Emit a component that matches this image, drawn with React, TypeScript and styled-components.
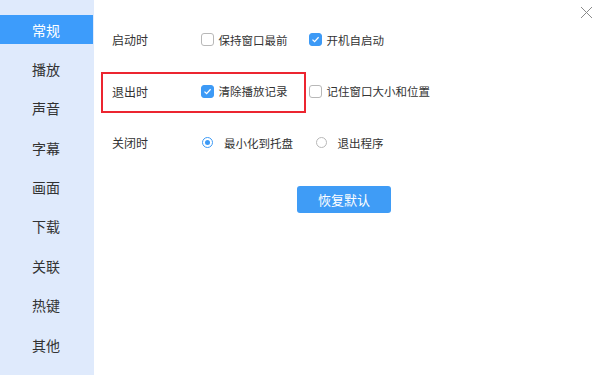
import React from "react";
import styled, { createGlobalStyle } from "styled-components";

const GlobalStyle = createGlobalStyle`
  html, body {
    margin: 0;
    padding: 0;
    width: 600px;
    height: 375px;
    overflow: hidden;
    background: #ffffff;
  }
  * { box-sizing: border-box; }
  body {
    font-family: "Noto Sans CJK SC", "Noto Sans", sans-serif;
    color: #333333;
  }
`;

const Window = styled.div`
  position: relative;
  width: 600px;
  height: 375px;
  display: flex;
  background: #ffffff;
`;

const Sidebar = styled.nav`
  width: 94px;
  height: 100%;
  background: #dfeafc;
  display: flex;
  flex-direction: column;
  gap: 10.4px;
  padding-top: 15px;
`;

const NavItem = styled.div<{ $active?: boolean }>`
  height: 29px;
  display: flex;
  align-items: center;
  justify-content: center;
  font-size: 14px;
  padding-right: 1px;
  color: ${(p) => (p.$active ? "#ffffff" : "#333333")};
  background: ${(p) => (p.$active ? "#3d9cfb" : "transparent")};
  width: 93px;
`;

const Main = styled.main`
  flex: 1;
  display: flex;
  flex-direction: column;
  padding: 29.5px 0 0 18px;
  gap: 31.5px;
`;

const Row = styled.div`
  position: relative;
  height: 20px;
  display: flex;
  align-items: center;
  font-size: 12px;
`;

const Label = styled.div`
  width: 89px;
  font-size: 12px;
  color: #333333;
`;

const Options = styled.div`
  display: flex;
  align-items: center;
  gap: 21.5px;
`;

const Option = styled.label<{ $radio?: boolean }>`
  display: flex;
  align-items: center;
  gap: ${(p) => (p.$radio ? "11px" : "4.5px")};
  padding-left: ${(p) => (p.$radio ? "1px" : "0")};
  font-size: 11.5px;
  color: #333333;
  cursor: pointer;
`;

const Box = styled.span<{ $checked?: boolean }>`
  width: 13px;
  height: 13px;
  border-radius: 3px;
  display: inline-flex;
  align-items: center;
  justify-content: center;
  background: ${(p) => (p.$checked ? "#3d9af6" : "#ffffff")};
  border: 1px solid ${(p) => (p.$checked ? "#3d9af6" : "#b8b8b8")};
`;

const Radio = styled.span<{ $checked?: boolean }>`
  width: 11px;
  height: 11px;
  border-radius: 50%;
  display: inline-flex;
  align-items: center;
  justify-content: center;
  border: 1px solid ${(p) => (p.$checked ? "#3d9af6" : "#b8b8b8")};
  background: #ffffff;
  &::after {
    content: "";
    width: 5px;
    height: 5px;
    border-radius: 50%;
    background: ${(p) => (p.$checked ? "#3d9af6" : "transparent")};
  }
`;

const Highlight = styled.div`
  position: absolute;
  left: -11px;
  top: -9px;
  width: 205px;
  height: 41px;
  border: 2px solid #ec2530;
  pointer-events: none;
`;

const Button = styled.button`
  margin-left: 185px;
  margin-top: 1.5px;
  width: 94px;
  height: 27px;
  border: none;
  border-radius: 3px;
  background: #3f9cf6;
  color: #ffffff;
  font-family: "Noto Sans CJK SC", "Noto Sans", sans-serif;
  font-size: 13px;
  cursor: pointer;
  align-self: flex-start;
`;

const Close = styled.button`
  position: absolute;
  top: 6px;
  right: 7px;
  width: 13px;
  height: 13px;
  padding: 0;
  border: none;
  background: transparent;
  display: flex;
  cursor: pointer;
`;

const Check = () => (
  <svg width="9" height="9" viewBox="0 0 9 9">
    <path d="M1.5 4.6 L3.6 6.6 L7.6 2.3" fill="none" stroke="#ffffff" strokeWidth="1.3" />
  </svg>
);

const CheckOption = ({ checked, text }: { checked?: boolean; text: string }) => (
  <Option>
    <Box $checked={checked}>{checked && <Check />}</Box>
    {text}
  </Option>
);

const RadioOption = ({ checked, text }: { checked?: boolean; text: string }) => (
  <Option $radio>
    <Radio $checked={checked} />
    {text}
  </Option>
);

const navItems = ["常规", "播放", "声音", "字幕", "画面", "下载", "关联", "热键", "其他"];

export default function App() {
  return (
    <>
      <GlobalStyle />
      <Window>
        <Sidebar>
          {navItems.map((n, i) => (
            <NavItem key={n} $active={i === 0}>
              {n}
            </NavItem>
          ))}
        </Sidebar>
        <Main>
          <Row>
            <Label>启动时</Label>
            <Options>
              <CheckOption text="保持窗口最前" />
              <CheckOption checked text="开机自启动" />
            </Options>
          </Row>
          <Row>
            <Highlight />
            <Label>退出时</Label>
            <Options>
              <CheckOption checked text="清除播放记录" />
              <CheckOption text="记住窗口大小和位置" />
            </Options>
          </Row>
          <Row>
            <Label>关闭时</Label>
            <Options>
              <RadioOption checked text="最小化到托盘" />
              <RadioOption text="退出程序" />
            </Options>
          </Row>
          <Button>恢复默认</Button>
        </Main>
        <Close aria-label="关闭">
          <svg width="13" height="13" viewBox="0 0 13 13">
            <path d="M1 1 L12 12 M12 1 L1 12" stroke="#8a8a8a" strokeWidth="1" fill="none" />
          </svg>
        </Close>
      </Window>
    </>
  );
}
